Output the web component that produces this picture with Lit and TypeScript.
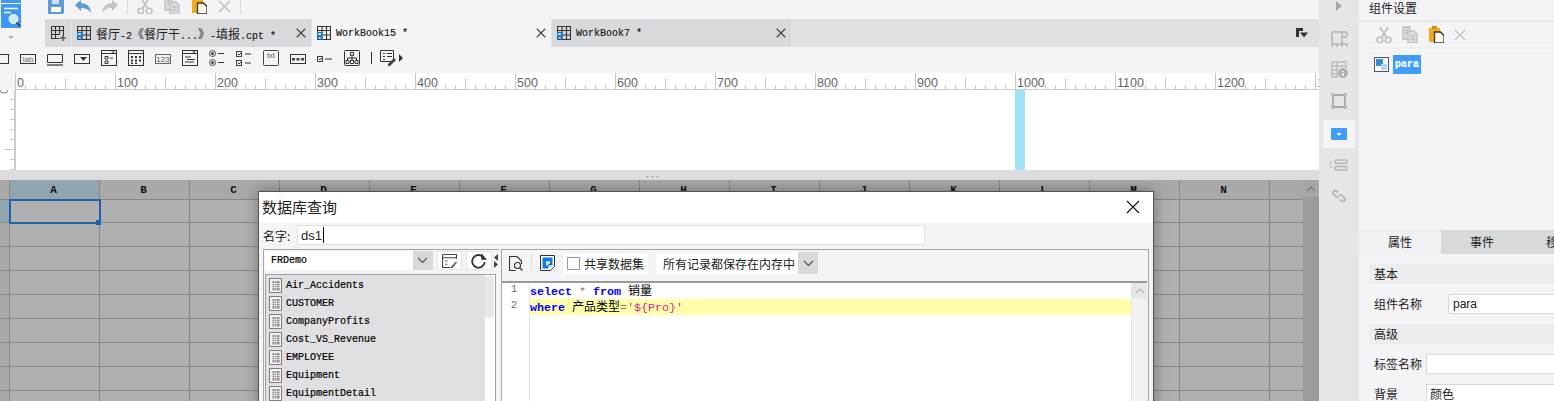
import { LitElement, html, css, svg } from "lit";
import { customElement } from "lit/decorators.js";

const GRID_COLS = "ABCDEFGHIJKLMN".split("");
const TABLES = ["Air_Accidents", "CUSTOMER", "CompanyProfits", "Cost_VS_Revenue", "EMPLOYEE", "Equipment", "EquipmentDetail"];
const TICKS = Array.from({ length: 131 }, (_, i) => i * 10);

const ic = (w: number, h: number, vb: string, body: unknown) =>
  html`<svg width=${w} height=${h} viewBox=${vb} fill="none" xmlns="http://www.w3.org/2000/svg">${body}</svg>`;

const scissors = (c: string) => svg`<g stroke=${c} stroke-width="1.6" fill="none"><circle cx="3.8" cy="14" r="2.8"/><circle cx="12.2" cy="14" r="2.8"/><path d="M5.5 11.6 12 1M10.5 11.6 4 1"/></g>`;
const copyDoc = (c: string) => svg`<g stroke=${c} stroke-width="1.3" fill="#fff"><path d="M1 1h7v12H1z" fill="#ddd"/><path d="M6 5h6l3 3v9H6z" fill="#ddd"/><path d="M3 4h3M3 7h2M8 10h5M8 13h5"/></g>`;
const paste = svg`<path d="M1 2h11v14H1z" fill="#f0ac1a"/><path d="M4 0h5v3H4z" fill="#d98a12"/><path d="M6.500 6h6l3.500 3.500V17H6.500z" fill="#fdf6e3" stroke="#333" stroke-width="1.300"/>`;
const cross = (c: string, s = 12) => svg`<path d=${`M1 1 ${s} ${s}M${s} 1 1 ${s}`} stroke=${c} stroke-width="1.500"/>`;
const tabIcon = svg`<g stroke="#333" stroke-width="1.100"><path d="M.5.500h13v13H.5zM.5 4.500h13M5 .5v13M9.500.5v13M.5 9h13"/></g><path d="M0 6h5.500v8H3.500v-3H2v3H0z" fill="#1878c8"/><path d="M1 7.500h3v1.500H1z" fill="#fff"/>`;
const listIcon = ic(13, 15, "0 0 13 15", svg`<path d="M.5.500h12v14H.5z" fill="#f2f2f2" stroke="#7d7d7d"/><path d="M3.500 3h7v9.500h-7z" fill="#8b8b8b"/><path d="M3 5.500h8M3 7.500h8M3 9.500h8M5.500 3v10M7.500 3v10" stroke="#e6e6e6" stroke-width=".8"/>`);
const chevron = (c: string) => ic(11, 7, "0 0 11 7", svg`<path d="M1 1 5.500 5.500 10 1" stroke=${c} stroke-width="1.200"/>`);

const WIDGETS = [
  svg`<rect x=".5" y="4.500" width="15" height="9" stroke="#333"/>`,
  svg`<rect x=".5" y="4.500" width="15" height="9" stroke="#333"/><text x="8" y="12" font-size="8" text-anchor="middle" fill="#666" font-family="Liberation Sans">lab</text>`,
  svg`<path d="M.5 4.500h15v8H.5z" stroke="#333"/><path d="M0 15h16" stroke="#333" stroke-width="1.200"/>`,
  svg`<rect x=".5" y="4.500" width="15" height="9" stroke="#333"/><path d="M6 7h7l-3.500 4z" fill="#333"/>`,
  svg`<rect x=".5" y=".5" width="15" height="15" stroke="#333"/><path d="M0 3.500h16" stroke="#333"/><path d="M10 1.500h4l-2 1.500z" fill="#333"/><path d="M4 6.500h3v2.500H4zM4 11h3v2.500H4z" stroke="#333"/><path d="M9 8h3" stroke="#333"/>`,
  svg`<rect x=".5" y=".5" width="15" height="15" stroke="#333"/><path d="M0 3.500h16" stroke="#333"/><path d="M3 6h2v2H3zM7 6h2v2H7zM11 6h2v2h-2zM3 9.500h2v2H3zM7 9.500h2v2H7zM11 9.500h2v2h-2zM3 12.500h2v1.500H3zM7 12.500h2v1.500H7z" fill="#333"/>`,
  svg`<rect x=".5" y="4.500" width="15" height="9" stroke="#666"/><text x="8" y="12" font-size="8" text-anchor="middle" fill="#555" font-family="Liberation Sans">123</text>`,
  svg`<rect x=".5" y=".5" width="15" height="15" stroke="#333"/><path d="M0 3.500h16M3 7h6M5 9.500h8M3 12h9" stroke="#333"/><path d="M10 1.500h4l-2 1.500z" fill="#333"/>`,
  svg`<circle cx="3.500" cy="3.500" r="3" stroke="#444"/><circle cx="3.500" cy="3.500" r="1.500" fill="#444"/><circle cx="3.500" cy="12.500" r="3" stroke="#444"/><circle cx="3.500" cy="12.500" r="1.500" fill="#444"/><path d="M9 3.500h6M9 12.500h6" stroke="#333"/>`,
  svg`<rect x=".5" y="1.500" width="5" height="5" stroke="#444"/><rect x=".5" y="10.500" width="5" height="5" stroke="#444"/><path d="M2 4l1 1 2-2M2 13l1 1 2-2M9 4h6M9 13h6" stroke="#333"/>`,
  svg`<rect x=".5" y=".5" width="15" height="15" rx="1" stroke="#444"/><text x="8" y="8" font-size="7.500" text-anchor="middle" fill="#555" font-family="Liberation Sans">txt</text>`,
  svg`<rect x=".5" y="4.500" width="15" height="9" stroke="#333"/><path d="M2 8h3v2.500H2zM6.500 8h3v2.500h-3zM11 8h3v2.500h-3z" fill="#444"/>`,
  svg`<rect x=".5" y="6.500" width="5" height="5" stroke="#444"/><path d="M2 9l1 1 2-2M8 9h7" stroke="#333"/>`,
  svg`<rect x=".5" y=".5" width="15" height="15" rx="1" stroke="#333"/><path d="M6.500 2.500h3v3h-3zM2 10.500h3v3H2zM6.500 10.500h3v3h-3zM11 10.500h3v3h-3zM8 5.500v5M3.500 10.500V8h9v2.500" stroke="#333"/>`,
];

@customElement("app-root")
export class AppRoot extends LitElement {
  static styles = css`
    :host { display: block; width: 1554px; height: 401px; overflow: hidden; position: relative; background: #f4f4f6; font-family: "Noto Sans CJK SC", "Liberation Sans", sans-serif; font-size: 12px; color: #222; }
    * { box-sizing: border-box; }
    svg { display: block; flex: none; }
    .root { display: flex; width: 1554px; height: 401px; }
    .main { width: 1319px; flex: none; display: flex; flex-direction: column; }
    .mono { font-family: "Liberation Mono", monospace; font-size: 10px; -webkit-text-stroke: .2px currentColor; }

    .head { display: flex; height: 47px; }
    .logo-col { width: 45px; flex: none; padding-left: 1px; display: flex; flex-direction: column; align-items: flex-start; }
    .arrow-down { margin: 8px 0 0 7px; }
    .head-right { flex: 1; display: flex; flex-direction: column; min-width: 0; }
    .top-tools { height: 19px; display: flex; align-items: flex-start; padding-left: 3px; }
    .t { margin-right: 11px; }
    .sep { width: 1px; height: 14px; background: #ddd; margin-right: 9px; margin-left: -2px; }
    .tabs { height: 28px; background: #dfe0e2; display: flex; align-items: stretch; }
    .tab-add { width: 26px; background: #d8d9dc; display: flex; align-items: center; justify-content: center; padding-left: 1px; }
    .tab { width: 240px; background: #d8d9dc; display: flex; align-items: center; padding: 0 5px; color: #222; border-left: 1px solid #e4e4e6; }
    .tab.active { background: #f4f4f6; }
    .tab-label { flex: 1; margin-left: 5px; white-space: nowrap; letter-spacing: 0; }
    .tab-label .cjk { font-family: "Noto Sans CJK SC", sans-serif; font-size: 12px; -webkit-text-stroke: 0; }
    .tab-tail { flex: 1; display: flex; justify-content: flex-end; align-items: center; padding-right: 11px; }

    .widgets { height: 26px; display: flex; align-items: flex-start; padding-top: 3px; gap: 11px; margin-left: -7px; }
    .w-sep { width: 1px; height: 12px; background: #333; margin: 2px 0 0 0; }
    .w-edit { display: flex; align-items: center; margin-left: -3px; gap: 3px; }

    .ruler { display: flex; height: 17px; background: #f4f4f6; }
    .corner { width: 15px; flex: none; }
    .canvas { height: 80px; display: flex; }
    .vruler { width: 16px; flex: none; background: #fff; border-right: 2px solid #ccc; }
    .paper { flex: 1; background: #fff; display: flex; padding-left: 999px; }
    .cyan { width: 10px; background: #9de3f5; }
    .divider { height: 10px; background: #dcdcde; display: flex; justify-content: center; align-items: center; padding-right: 14px; color: #555; font-size: 5px; letter-spacing: 0; }

    .sheet { flex: 1; position: relative; background: #b0b0b0; display: flex; overflow: hidden; }
    .grid { flex: 1; display: flex; flex-direction: column; }
    .row { display: flex; height: 24px; flex: none; }
    .row.hdr { height: 20px; }
    .row.first { height: 23px; }
    .c { width: 90px; flex: none; border-right: 1px solid #888; border-bottom: 1px solid #888; display: flex; align-items: center; justify-content: center; padding-right: 2px; color: #111; font-family: "Liberation Mono", monospace; font-size: 11px; font-weight: 700; }
    .c.rh { width: 10px; background: #a9a9a9; padding: 0; }
    .c.fill { flex: 1; width: auto; border-right: 0; }
    .hdr .c { background: #a9a9a9; }
    .hdr .c.on, .c.rh.on { background: #91a6ae; }
    .vscroll { width: 16px; background: #9b9b9b; flex: none; }
    .vscroll-btn { height: 17px; background: #a6a6a6; display: flex; align-items: center; justify-content: center; }
    .sel { position: absolute; left: 9px; top: 19px; width: 92px; height: 25px; border: 2px solid #1f5fb0; }
    .sel::after { content: ""; position: absolute; right: -2px; bottom: -3px; width: 5px; height: 5px; background: #1f5fb0; }

    .dialog { position: absolute; left: 258px; top: 11px; width: 896px; height: 300px; background: #f4f4f6; border: 1px solid #555; box-shadow: 0 0 14px rgba(0,0,0,.35); }
    .d-head { height: 31px; background: #fff; display: flex; align-items: center; justify-content: space-between; padding: 0 13px 2px 3px; font-size: 15px; color: #222; }
    .d-name { display: flex; align-items: center; height: 20px; margin-top: 2px; padding-left: 4px; gap: 3px; }
    .d-name-label { width: 31px; }
    .d-input { width: 628px; height: 20px; background: #fff; border: 1px solid #e0e0e2; display: flex; align-items: center; padding-left: 3px; font-family: "Liberation Sans", sans-serif; font-size: 13px; }
    .caret { width: 1px; height: 16px; background: #000; margin-left: 1px; }
    .panels { display: flex; margin-top: 4px; padding-left: 4px; height: 200px; }

    .left { width: 236px; flex: none; border-top: 1px solid #a8a698; border-left: 1px solid #a8a698; padding: 1px 0 0 1px; }
    .conn { display: flex; height: 19px; align-items: stretch; position: relative; }
    .conn-sel { width: 149px; background: #fff; display: flex; align-items: center; padding-left: 6px; color: #000; }
    .arrow-btn { width: 20px; background: #d8d9dc; display: flex; align-items: center; justify-content: center; flex: none; }
    .tool-btn { width: 26px; background: #fff; border: 1px solid #e4e4e6; display: flex; align-items: center; justify-content: center; margin-left: 4px; }
    .split { width: 5px; display: flex; flex-direction: column; justify-content: space-between; margin-left: 2px; padding: 3px 0; }
    .list { margin-top: 4px; width: 231px; height: 180px; background: #e0e0e2; border: 1px solid #a0a0a0; display: flex; }
    .list-body { flex: 1; display: flex; flex-direction: column; padding: 1px 0 0 3px; }
    .li { height: 18px; display: flex; align-items: center; gap: 4px; color: #000; flex: none; }
    .list-sb { width: 10px; background: #fff; padding: 1px 1px 0 0; }
    .thumb { height: 42px; background: #e8e8ea; border-radius: 3px; }

    .right { width: 648px; margin-left: 2px; flex: none; border-top: 1px solid #a8a698; border-right: 1px solid #a8a698; border-left: 1px solid #a8a698; display: flex; flex-direction: column; }
    .r-tools { height: 31px; display: flex; align-items: center; padding: 0 0 5px 7px; flex: none; }
    .r-sep { width: 1px; height: 16px; background: #ddd; margin: 0 8px; }
    .share { height: 21px; background: #fff; display: flex; align-items: center; padding: 0 4px; margin-left: 8px; gap: 4px; color: #222; width: 85px; }
    .box { width: 13px; height: 13px; border: 1px solid #999; background: #fff; flex: none; }
    .mem { display: flex; height: 22px; margin-left: 8px; }
    .mem-text { width: 142px; background: #fff; display: flex; align-items: center; padding-left: 7px; color: #222; white-space: nowrap; }
    .editor { flex: 1; background: #fff; border-top: 2px solid #999; display: flex; margin-right: 1px; }
    .gutter { width: 28px; flex: none; border-right: 1px solid #e4e4e4; font-family: "Liberation Mono", monospace; font-size: 11px; color: #777; display: flex; flex-direction: column; align-items: center; }
    .gutter span { height: 16px; line-height: 13px; padding-right: 3px; }
    .code { flex: 1; min-width: 0; font-family: "Liberation Mono", "Noto Sans CJK SC", monospace; font-size: 11.67px; }
    .line { height: 16px; line-height: 13px; white-space: pre; color: #000; }
    .line.hl { background: #ffffaa; }
    .kw { color: #0000ff; font-weight: 700; }
    .op { color: #b06a50; }
    .str { color: #e020a0; }
    .zh { font-family: "Noto Sans CJK SC", sans-serif; font-size: 12px; line-height: 13px; }
    .e-sb { width: 16px; flex: none; background: #f2f2f2; border-left: 1px solid #e8e8e8; }
    .e-sb-btn { height: 15px; background: #e6e6e6; display: flex; align-items: center; justify-content: center; }

    .strip { width: 40px; flex: none; background: #e6e6e6; display: flex; flex-direction: column; align-items: center; }
    .s-i { width: 32px; height: 28px; display: flex; align-items: center; justify-content: center; margin-bottom: 3px; flex: none; }
    .s-i.first { height: 13px; margin-bottom: 12px; align-items: flex-start; }
    .s-i.before-on { margin-bottom: 5px; }
    .s-i.on { background: #f4f4f6; }

    .panel { flex: 1; min-width: 0; display: flex; flex-direction: column; overflow: hidden; }
    .p-title { height: 22px; padding: 0 0 6px 10px; border-bottom: 2px solid #e8e8ea; display: flex; align-items: center; font-size: 12px; color: #222; flex: none; }
    .p-tools { margin-left: 10px; height: 27px; border-bottom: 2px solid #eeeeef; display: flex; align-items: center; padding-left: 7px; gap: 10px; flex: none; }
    .p-tree { height: 181px; flex: none; padding: 8px 0 0 15px; display: flex; align-items: flex-start; gap: 4px; }
    .p-sel { background: #3f9cfb; color: #fff; height: 19px; width: 28px; display: flex; align-items: center; justify-content: center; font-weight: 700; margin-top: -2px; }
    .p-tabs { display: flex; height: 24px; flex: none; width: 246px; }
    .p-tab { width: 82px; flex: none; background: #d8d9dc; display: flex; align-items: center; justify-content: center; padding-bottom: 1px; font-size: 12px; color: #222; }
    .p-tab.on { background: #f0f0f2; }
    .p-body { padding: 10px 0 0 10px; display: flex; flex-direction: column; width: 300px; }
    .sec { height: 20px; background: #ededee; padding: 0 0 2px 5px; display: flex; align-items: center; flex: none; }
    .f { display: flex; align-items: center; height: 20px; margin: 10px 0; padding-left: 5px; flex: none; }
    .f.tight { margin: 0; }
    .f-l { flex: none; padding-bottom: 2px; }
    .f-i { width: 200px; height: 20px; background: #fff; border: 1px solid #d8d8da; display: flex; align-items: center; padding: 0 0 2px 3px; flex: none; }
    .f-i.wide { margin-left: 26px; font-family: "Liberation Sans", sans-serif; font-size: 12px; padding: 0 0 0 4px; }
    .f-i.n { margin-left: 4px; }
    .f-i.b { margin-left: 28px; }
  `;

  render() {
    const gray = "#c0c0c0";
    return html`<div class="root">
      <div class="main">
        <div class="head">
          <div class="logo-col">
            ${ic(20, 28, "0 0 20 28", svg`<path d="M0 0h20v28H0z" fill="#3d97f4"/><path d="M0 3.500h20" stroke="#fff" stroke-width="1"/><path d="M3 8.500h14M3 12.500h7" stroke="#fff" stroke-width="1.500"/><circle cx="12.500" cy="19" r="4.500" fill="#cfe6fb" stroke="#fff"/><path d="M15.500 22.500 19 26" stroke="#333" stroke-width="1.500"/>`)}
            <div class="arrow-down">${ic(6, 3, "0 0 6 3", svg`<path d="M0 0h6L3 3z" fill="#b5b5b5"/>`)}</div>
          </div>
          <div class="head-right">
            <div class="top-tools">
              <div class="t">${ic(16, 14, "0 3 16 14", svg`<path d="M0 3h16v12q0 2-2 2H0z" fill="#5b9bd9"/><path d="M3 10h10v5H3z" fill="#fff"/><path d="M4 3h7v4H4z" fill="#cfe1f4"/>`)}</div>
              <div class="t">${ic(16, 14, "0 0 16 14", svg`<path d="M0 5 6 0v3q9 0 10 10-3-5-10-5v3z" fill="#5b9bd9"/>`)}</div>
              <div class="t">${ic(16, 14, "0 0 16 14", svg`<path d="M16 5 10 0v3Q1 3 0 13q3-5 10-5v3z" fill="#c4c4c4"/>`)}</div>
              <div class="sep"></div>
              <div class="t">${ic(16, 14, "0 3 16 14", scissors(gray))}</div>
              <div class="t">${ic(16, 14, "0 3 16 14", copyDoc(gray))}</div>
              <div class="t">${ic(16, 14, "0 3 16 14", paste)}</div>
              <div class="t">${ic(13, 13, "0 0 13 13", cross(gray))}</div>
              <div class="sep"></div>
            </div>
            <div class="tabs">
              <div class="tab-add">${ic(15, 15, "0 0 15 15", svg`<path d="M.5.500h12v9M.5.500v12h8M.5 4.500h12M4.500.5v12M8.500.5v8M.5 8.500h8M12 9v6M9 12h6" stroke="#333" stroke-width="1.100"/>`)}</div>
              <div class="tab">
                ${ic(14, 14, "0 0 14 14", tabIcon)}
                <div class="tab-label mono"><span class="cjk">餐厅</span>-2<span class="cjk">《餐厅干</span>...<span class="cjk">》</span>-<span class="cjk">填报</span>.cpt *</div>
                ${ic(10, 10, "0 0 13 13", cross("#444", 12))}
              </div>
              <div class="tab active">
                ${ic(14, 14, "0 0 14 14", tabIcon)}
                <div class="tab-label mono">WorkBook15 *</div>
                ${ic(10, 10, "0 0 13 13", cross("#444", 12))}
              </div>
              <div class="tab">
                ${ic(14, 14, "0 0 14 14", tabIcon)}
                <div class="tab-label mono">WorkBook7 *</div>
                ${ic(10, 10, "0 0 13 13", cross("#444", 12))}
              </div>
              <div class="tab-tail">${ic(12, 10, "0 0 12 10", svg`<path d="M0 0h7v3H3v6H0z" fill="#333"/><path d="M4 4.500h8L8 9.500z" fill="#333"/>`)}</div>
            </div>
          </div>
        </div>

        <div class="widgets">
          ${WIDGETS.map((w) => ic(16, 16, "0 0 16 16", w))}
          <div class="w-sep"></div>
          <div class="w-edit">
            ${ic(16, 16, "0 0 16 16", svg`<path d="M.5.500h13v11H.5z" stroke="#333"/><path d="M3 3.500h2M7 3.500h5M3 6.500h2M7 6.500h5M3 9.500h2" stroke="#333"/><path d="M8 14l6-6 2 2-6 6H8z" fill="#444"/>`)}
            ${ic(4, 8, "0 0 4 8", svg`<path d="M0 0l4 4-4 4z" fill="#333"/>`)}
          </div>
        </div>

        <div class="ruler">
          <div class="corner"></div>
          ${ic(1304, 17, "0 0 1304 17", svg`
            <rect width="1304" height="17" fill="#fff"/>
            ${TICKS.map((t) => {
              const x = t + 0.5;
              const top = t % 100 === 0 ? 0 : t % 50 === 0 ? 5 : 12;
              return svg`<path d=${`M${x} ${top}V16`} stroke="#c8c8c8"/>`;
            })}
            ${TICKS.filter((t) => t % 100 === 0).map((t) => svg`<text x=${t + 2} y="14" font-size="12.500" fill="#666" font-family="Liberation Sans">${t}</text>`)}
            <rect y="16" width="1304" height="1" fill="#ccc"/>
          `)}
        </div>
        <div class="canvas">
          <div class="vruler">${ic(14, 80, "0 0 14 80", svg`
            ${[0, 1, 2, 3, 4, 5, 6, 7].map((i) => svg`<path d=${`M${i === 5 ? 4 : 10} ${9.5 + i * 10}H14`} stroke="#c8c8c8"/>`)}
            <ellipse cx="4" cy="1" rx="3.500" ry="2" stroke="#777" fill="none"/>
          `)}</div>
          <div class="paper"><div class="cyan"></div></div>
        </div>
        <div class="divider">•••</div>

        <div class="sheet">
          <div class="grid">
            <div class="row hdr">
              <div class="c rh"></div>
              ${GRID_COLS.map((c, i) => html`<div class="c ${i === 0 ? "on" : ""}">${c}</div>`)}
              <div class="c fill"></div>
            </div>
            ${[0, 1, 2, 3, 4, 5, 6, 7, 8].map((r) => html`<div class="row ${r === 0 ? "first" : ""}">
              <div class="c rh ${r === 0 ? "on" : ""}"></div>
              ${GRID_COLS.map(() => html`<div class="c"></div>`)}
              <div class="c fill"></div>
            </div>`)}
          </div>
          <div class="vscroll">
            <div class="vscroll-btn">${ic(10, 6, "0 0 10 6", svg`<path d="M1 5 5 1l4 4" stroke="#777" stroke-width="1.200"/>`)}</div>
          </div>
          <div class="sel"></div>

          <div class="dialog">
            <div class="d-head">
              <span>数据库查询</span>
              ${ic(14, 14, "0 0 14 14", svg`<path d="M1 1 13 13M13 1 1 13" stroke="#111" stroke-width="1.100"/>`)}
            </div>
            <div class="d-name">
              <span class="d-name-label">名字:</span>
              <div class="d-input">ds1<span class="caret"></span></div>
            </div>
            <div class="panels">
              <div class="left">
                <div class="conn">
                  <div class="conn-sel mono">FRDemo</div>
                  <div class="arrow-btn">${chevron("#555")}</div>
                  <div class="tool-btn">${ic(15, 14, "0 0 14 13", svg`<path d="M.5.500h13v4M.5.500v12h7M.5 3.500h13M3 6.500h2M3 9.500h2" stroke="#444"/><path d="M8 12l5-5 1 1-4 5H8z" fill="#666"/>`)}</div>
                  <div class="tool-btn">${ic(16, 16, "0 0 14 14", svg`<path d="M12 8a5.500 5.500 0 1 1-2-5" stroke="#333" stroke-width="1.600"/><path d="M9 0v6h5z" fill="#333"/>`)}</div>
                  <div class="split">
                    ${ic(4, 7, "0 0 4 7", svg`<path d="M4 0v7L0 3.500z" fill="#444"/>`)}
                    ${ic(4, 7, "0 0 4 7", svg`<path d="M0 0v7l4-3.500z" fill="#444"/>`)}
                  </div>
                </div>
                <div class="list">
                  <div class="list-body">
                    ${TABLES.map((t) => html`<div class="li mono">${listIcon}<span>${t}</span></div>`)}
                  </div>
                  <div class="list-sb"><div class="thumb"></div></div>
                </div>
              </div>
              <div class="right">
                <div class="r-tools">
                  ${ic(14, 15, "0 0 14 15", svg`<path d="M8 .5H.5v14h6M8 .5l4.500 4.500v3" stroke="#333" stroke-width="1.100"/><circle cx="8.500" cy="9.500" r="3" stroke="#333" stroke-width="1.100"/><path d="M11 12l2.500 2.500" stroke="#333" stroke-width="1.300"/>`)}
                  <div class="r-sep"></div>
                  ${ic(15, 16, "0 0 15 16", svg`<path d="M.5.500h14v11l-4 4H.5z" stroke="#333" fill="#fff"/><path d="M2.500 2.500h10v8h-4v3h-6z" fill="#0f7bd6"/><path d="M6 6.500h4v2H8v2H6z" fill="#fff"/>`)}
                  <div class="share"><span class="box"></span><span>共享数据集</span></div>
                  <div class="mem">
                    <div class="mem-text">所有记录都保存在内存中</div>
                    <div class="arrow-btn">${chevron("#555")}</div>
                  </div>
                </div>
                <div class="editor">
                  <div class="gutter"><span>1</span><span>2</span></div>
                  <div class="code">
                    <div class="line"><span class="kw">select</span> <span class="op">*</span> <span class="kw">from</span> <span class="zh">销量</span></div>
                    <div class="line hl"><span class="kw">where</span> <span class="zh">产品类型</span><span class="op">=</span><span class="str">'\${Pro}'</span></div>
                  </div>
                  <div class="e-sb">
                    <div class="e-sb-btn">${ic(10, 6, "0 0 10 6", svg`<path d="M1 5 5 1l4 4" stroke="#bbb" stroke-width="1.400"/>`)}</div>
                  </div>
                </div>
              </div>
            </div>
          </div>
        </div>
      </div>

      <div class="strip">
        <div class="s-i first">${ic(6, 12, "0 0 6 12", svg`<path d="M0 1l6 5-6 5z" fill="#aaa"/>`)}</div>
        <div class="s-i">${ic(17, 17, "0 0 17 17", svg`<path d="M1 1h15M1 1v12M1 13h15M16 1v4M1 13v3M6 13v3M11 13v3M16 13v3M11 1v12M11 6h5" stroke="#bdbdbd" stroke-width="1.800"/>`)}</div>
        <div class="s-i">${ic(17, 18, "0 0 17 18", svg`<path d="M1 1h14v6M1 1v15h6M1 5h14M6 1v15M1 9h6M1 13h6" stroke="#bdbdbd" stroke-width="1.500"/><circle cx="12" cy="12" r="5" fill="#b0b0b0"/><path d="M12 10v1M12 12v3" stroke="#fff" stroke-width="1.500"/>`)}</div>
        <div class="s-i before-on">${ic(16, 16, "0 0 16 16", svg`<path d="M2 2h12v12H2z" stroke="#a8a8a8" stroke-width="1.800"/><path d="M0 0h3v3H0zM13 0h3v3h-3zM0 13h3v3H0zM13 13h3v3h-3z" fill="#bbb"/>`)}</div>
        <div class="s-i on">${ic(16, 12, "0 0 16 12", svg`<rect width="16" height="12" rx="1" fill="#3f9cfb"/><path d="M5.500 5h5L8 8z" fill="#fff"/>`)}</div>
        <div class="s-i">${ic(18, 12, "0 0 18 12", svg`<rect x="5" y="1" width="12" height="3.500" rx="1.500" stroke="#b5b5b5" stroke-width="1.500"/><rect x="5" y="7.500" width="12" height="3.500" rx="1.500" stroke="#b5b5b5" stroke-width="1.500"/><path d="M2.500 2.500H.5v6h2" stroke="#c0c0c0"/>`)}</div>
        <div class="s-i">${ic(16, 16, "0 0 16 16", svg`<path d="M7 4.500 5 2.500a2.500 2.500 0 0 0-3 3l3 3a2.500 2.500 0 0 0 3 0M9 11.500l2 2a2.500 2.500 0 0 0 3-3l-3-3a2.500 2.500 0 0 0-3 0" stroke="#b8b8b8" stroke-width="2"/>`)}</div>
      </div>

      <div class="panel">
        <div class="p-title">组件设置</div>
        <div class="p-tools">
          ${ic(16, 17, "0 0 16 17", scissors("#bdbdbd"))}
          ${ic(16, 17, "0 0 16 17", copyDoc("#bdbdbd"))}
          ${ic(16, 17, "0 0 16 17", paste)}
          ${ic(12, 12, "0 0 13 13", cross("#c4c4c4"))}
        </div>
        <div class="p-tree">
          ${ic(15, 15, "0 0 15 15", svg`<rect x=".5" y=".5" width="14" height="14" stroke="#555" fill="#fff"/><path d="M2 2h7v7H2z" fill="#2f8fd0"/><path d="M7 7h6v6H7z" fill="#b7d3f2"/>`)}
          <div class="p-sel mono">para</div>
        </div>
        <div class="p-tabs">
          <div class="p-tab on">属性</div>
          <div class="p-tab">事件</div>
          <div class="p-tab">移动端</div>
        </div>
        <div class="p-body">
          <div class="sec">基本</div>
          <div class="f"><span class="f-l">组件名称</span><div class="f-i wide">para</div></div>
          <div class="sec">高级</div>
          <div class="f"><span class="f-l">标签名称</span><div class="f-i n"></div></div>
          <div class="f tight"><span class="f-l">背景</span><div class="f-i b">颜色</div></div>
        </div>
      </div>
    </div>`;
  }
}
